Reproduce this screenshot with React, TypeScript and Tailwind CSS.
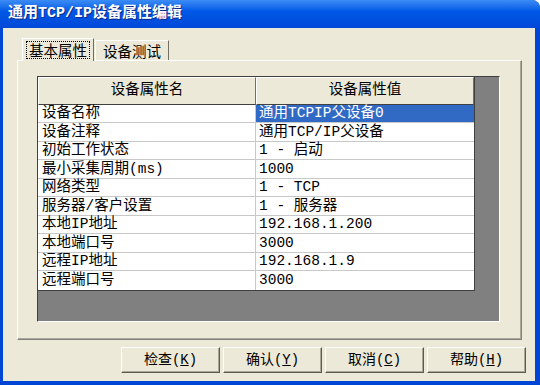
import React from 'react';

const font = "font-['Liberation_Mono','Noto_Sans_CJK_SC',monospace]";
const cjk = "font-['Noto_Sans_CJK_SC',sans-serif]";

const rows: { name: string; value: string; h: number }[] = [
  { name: '设备名称', value: '通用TCPIP父设备0', h: 18 },
  { name: '设备注释', value: '通用TCP/IP父设备', h: 19 },
  { name: '初始工作状态', value: '1 - 启动', h: 18 },
  { name: '最小采集周期(ms)', value: '1000', h: 19 },
  { name: '网络类型', value: '1 - TCP', h: 18 },
  { name: '服务器/客户设置', value: '1 - 服务器', h: 19 },
  { name: '本地IP地址', value: '192.168.1.200', h: 18 },
  { name: '本地端口号', value: '3000', h: 19 },
  { name: '远程IP地址', value: '192.168.1.9', h: 18 },
  { name: '远程端口号', value: '3000', h: 19 },
];

function XpButton({ label, hotkey }: { label: string; hotkey: string }) {
  return (
    <button className="w-[99px] h-[26px] bg-[#ECE9D8] border-t border-l border-white border-r border-b border-r-[#5C5A50] border-b-[#5C5A50] shadow-[inset_-1px_-1px_0_#ACA899] flex items-center justify-center text-[14px] text-black">
      <span>
        {label}(<span className="underline">{hotkey}</span>)
      </span>
    </button>
  );
}

export default function App() {
  return (
    <div className={`w-[540px] h-[385px] bg-[#0046D5] rounded-tr-[8px] flex flex-col ${font}`}>
      {/* title bar */}
      <div className="h-[28px] shrink-0 rounded-tr-[8px] bg-gradient-to-b from-[#3B8CF5] via-[#0058E6] via-40% to-[#0048D8] flex items-center pl-[8px]">
        <span className="text-white font-bold text-[15px] [text-shadow:1px_1px_0_#0A2A8A]">
          通用TCP/IP设备属性编辑
        </span>
      </div>

      {/* window body */}
      <div className="flex-1 ml-[3px] mr-[5px] mb-[4px] bg-[#ECE9D8] flex flex-col pl-[14px] pt-[10px]">
        {/* tabs */}
        <div className={`flex items-end h-[22px] pl-[5px] relative z-10 ${cjk}`}>
          <div className="h-[23px] w-[72px] bg-[#ECE9D8] border-t border-l border-white border-r border-r-[#716F64] -mb-[1px] flex items-center justify-center">
            <span className="border border-dotted border-black px-[2px] leading-[16px] text-[14.5px] text-black">基本属性</span>
          </div>
          <div className="h-[20px] w-[74px] ml-[1px] bg-[#ECE9D8] border-t border-l border-white border-r border-r-[#716F64] flex items-center justify-center text-[14.5px] text-black">
            设备测试
          </div>
        </div>

        {/* tab panel */}
        <div className="w-[505px] h-[280px] border-t border-l border-white border-r border-b border-r-[#808080] border-b-[#808080] shadow-[inset_-1px_-1px_0_#ACA899] pl-[19px] pt-[15px]">
          <div className="w-[463px] h-[246px] bg-[#808080] border-t border-l border-[#404040] border-r border-b border-r-white border-b-white">
            <div className="w-[437px] border-r border-b border-[#404040] bg-white text-[14.5px] text-black">
              {/* header */}
              <div className="flex h-[28px]">
                <div className="w-[218px] bg-[#ECE9D8] border-t border-l border-white border-r border-b border-r-[#716F64] border-b-[#404040] flex items-center justify-center">
                  设备属性名
                </div>
                <div className="flex-1 bg-[#ECE9D8] border-t border-l border-white border-r border-b border-r-[#716F64] border-b-[#404040] flex items-center justify-center">
                  设备属性值
                </div>
              </div>
              {rows.map((r, i) => (
                <div key={r.name} className="flex border-b border-[#C8C8C8] last:border-b-0" style={{ height: r.h }}>
                  <div className="w-[218px] border-r border-[#C8C8C8] flex items-center pl-[4px] pt-[1px] whitespace-nowrap">
                    {r.name}
                  </div>
                  <div
                    className={`flex-1 flex items-center pl-[3px] pt-[1px] whitespace-nowrap ${
                      i === 0 ? 'bg-[#316AC5] text-white' : ''
                    }`}
                  >
                    {r.value}
                  </div>
                </div>
              ))}
            </div>
          </div>
        </div>

        {/* buttons */}
        <div className="flex justify-end gap-[3px] mt-[7px] pr-[9px]">
          <XpButton label="检查" hotkey="K" />
          <XpButton label="确认" hotkey="Y" />
          <XpButton label="取消" hotkey="C" />
          <XpButton label="帮助" hotkey="H" />
        </div>
      </div>
    </div>
  );
}
